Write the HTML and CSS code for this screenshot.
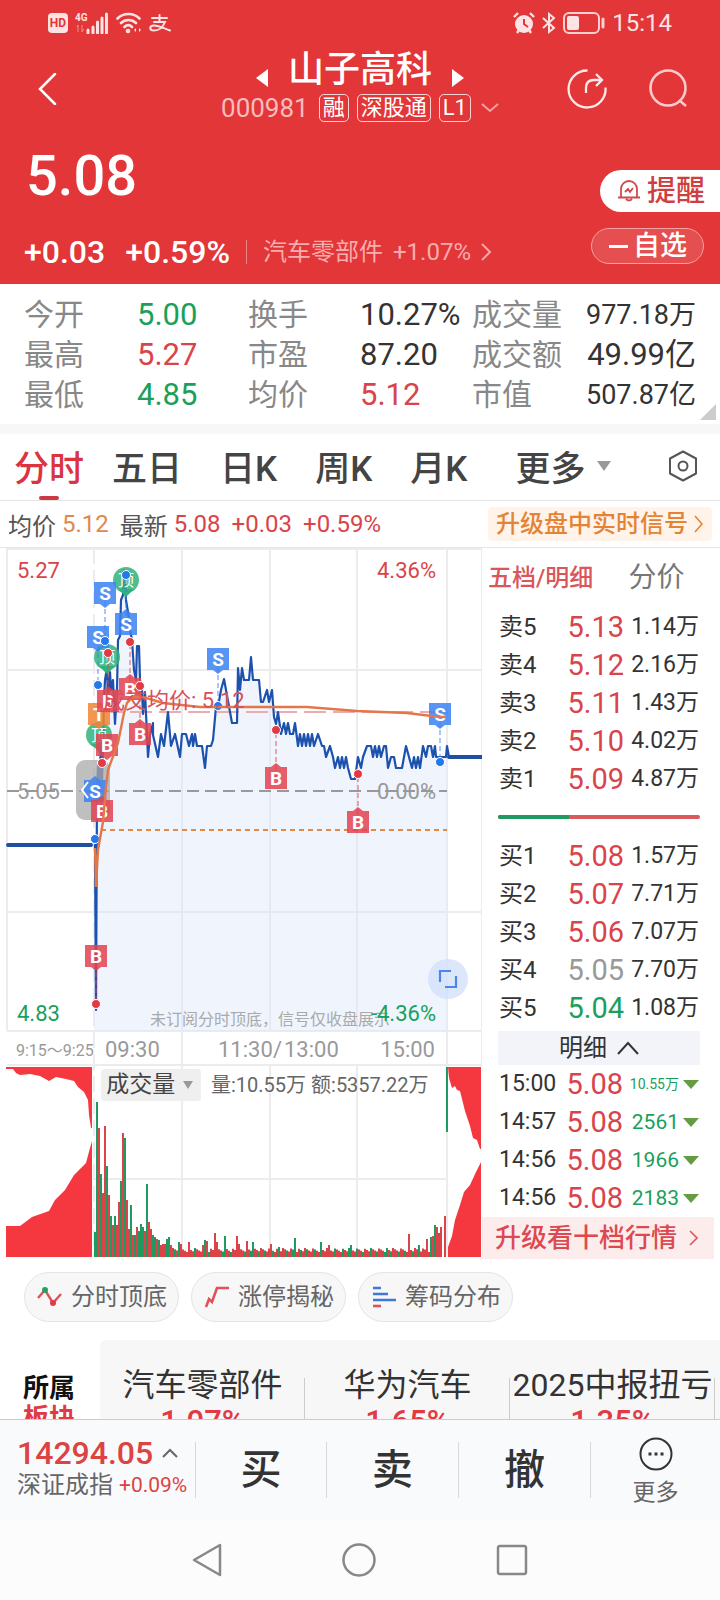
FILE: index.html
```html
<!DOCTYPE html>
<html lang="zh-CN">
<head>
<meta charset="utf-8">
<meta name="viewport" content="width=device-width, initial-scale=1">
<title>山子高科 000981</title>
<link rel="stylesheet" href="styles.css">
</head>
<body>
<div class="app">
  <header class="hero">
    <div class="status">
      <div class="status-group">
        <svg width="20" height="20" viewBox="0 0 20 20"><rect width="20" height="20" rx="4" fill="#fde3e3"/><text x="10" y="14" font-size="12" font-weight="700" text-anchor="middle" fill="#e23638">HD</text></svg>
        <svg width="34" height="22" viewBox="0 0 34 22"><text x="0" y="9" font-size="10" font-weight="700" fill="#fde3e3">4G</text><path d="M3 13v7M2 15l1-2M7 13v7l2-3" stroke="#f08c8c" fill="none"/><path d="M13 18v3M18 15v6M22.500 10v11M27 6v15M31.500 2v19" stroke="#fde3e3" stroke-width="3" stroke-linecap="round"/></svg>
        <svg width="26" height="22" viewBox="0 0 26 22" fill="none" stroke="#fde3e3" stroke-width="2.600" stroke-linecap="round"><path d="M1.500 6.500c6-6 16-6 22 0M5 11c4-4 11-4 15 0M8.500 15c2.500-2.500 5-2.500 7.500 0"/><circle cx="12" cy="19" r="1" /><path d="M18 18l2-2v4zM25 18l-2-2v4z" stroke="none" fill="#fde3e3"/></svg>
        <svg width="22" height="18" viewBox="0 0 22 18" fill="none" stroke="#fde3e3" stroke-width="2" stroke-linecap="round"><path d="M3 4h15M10.500 1v7M5 8h11c-2 5-6 8.500-11 8.500-5 0-5-5 0-5 5 0 10 3 16 5"/></svg>
      </div>
      <div class="status-group">
        <svg width="22" height="22" viewBox="0 0 22 22"><circle cx="11" cy="12" r="9" fill="#fde3e3"/><path d="M1 5l4-4M21 5l-4-4M4 21l2-3M18 21l-2-3" stroke="#fde3e3" stroke-width="2.400"/><path d="M11 7v5l4 3" stroke="#e23638" stroke-width="2" fill="none"/></svg>
        <svg width="14" height="22" viewBox="0 0 14 22" fill="none" stroke="#fde3e3" stroke-width="2"><path d="M1 6l11 10-5 4V2l5 4L1 16"/></svg>
        <svg width="42" height="22" viewBox="0 0 42 22"><rect x="1" y="1" width="35" height="20" rx="5" fill="none" stroke="#fbd0d0" stroke-width="2"/><rect x="4" y="4" width="12" height="14" rx="2" fill="#fde3e3"/><path d="M40 7v8" stroke="#fbd0d0" stroke-width="3" stroke-linecap="round"/></svg>
        <span class="clock">15:14</span>
      </div>
    </div>
    <div class="topbar">
      <button class="icon-btn back" aria-label="返回"><svg width="20" height="32" viewBox="0 0 20 32" fill="none" stroke="#fff" stroke-width="2.500" stroke-linecap="round"><path d="M17 1L2 16l15 15"/></svg></button>
      <div class="title-block">
        <div class="title-row">
          <button class="icon-btn" aria-label="上一只"><svg width="12" height="18" viewBox="0 0 12 18"><path d="M12 0v18L0 9z" fill="#fff"/></svg></button>
          <h1>山子高科</h1>
          <button class="icon-btn" aria-label="下一只"><svg width="12" height="18" viewBox="0 0 12 18"><path d="M0 0v18l12-9z" fill="#fff"/></svg></button>
        </div>
        <div class="code-row"><span class="code">000981</span><span class="tag">融</span><span class="tag">深股通</span><span class="tag">L1</span>
          <svg class="code-more" width="18" height="10" viewBox="0 0 18 10" fill="none" stroke="#f3a0a0" stroke-width="2"><path d="M1 1l8 7 8-7"/></svg></div>
      </div>
      <div class="top-actions">
        <button class="icon-btn" aria-label="分享"><svg width="40" height="40" viewBox="0 0 40 40" fill="none" stroke="#ffe9e9" stroke-width="2.300"><path d="M20.500 1.500A18.500 18.500 0 1 0 38.500 18.500"/><path d="M19 24v-5q0-8 8-8h8M29 5l6 6-6 6"/></svg></button>
        <button class="icon-btn" aria-label="搜索"><svg width="40" height="40" viewBox="0 0 40 40" fill="none" stroke="#fbcaca" stroke-width="2.600"><circle cx="20" cy="19" r="17.500"/><path d="M31 31l7 6"/></svg></button>
      </div>
    </div>
    <div class="quote-row">
      <strong class="price">5.08</strong>
      <button class="remind"><svg width="22" height="24" viewBox="0 0 22 24" fill="none" stroke="#cf4a4c" stroke-width="1.800"><path d="M3 18V10a8 8 0 0 1 16 0v8M0 18.500h22M8 20q3 3 6 0M7 13l3-3 2 3 3-4"/></svg>提醒</button>
    </div>
    <div class="change-row">
      <span class="chg">+0.03</span><span class="chg">+0.59%</span>
      <a class="industry" href="#">汽车零部件 <span>+1.07%</span><svg width="10" height="18" viewBox="0 0 10 18" fill="none" stroke="#f6a5a5" stroke-width="2"><path d="M1 1l8 8-8 8"/></svg></a>
      <button class="watch"><i></i>自选</button>
    </div>
  </header>

  <main class="content">
    <section class="stats">
      <dl>
        <dt>今开</dt><dd class="down">5.00</dd><dt>换手</dt><dd>10.27%</dd><dt>成交量</dt><dd class="end small">977.18万</dd>
        <dt>最高</dt><dd class="up">5.27</dd><dt>市盈</dt><dd>87.20</dd><dt>成交额</dt><dd class="end">49.99亿</dd>
        <dt>最低</dt><dd class="down">4.85</dd><dt>均价</dt><dd class="up">5.12</dd><dt>市值</dt><dd class="end small">507.87亿</dd>
      </dl>
      <svg class="corner" width="16" height="16"><path d="M16 0v16H0z" fill="#ccc"/></svg>
    </section>

    <nav class="periods">
      <button class="active">分时</button><button>五日</button><button>日K</button><button>周K</button><button>月K</button>
      <button class="more">更多<svg width="14" height="10"><path d="M0 0h14L7 10z" fill="#999"/></svg></button>
      <button class="gear" aria-label="设置"><svg width="30" height="32" viewBox="0 0 30 32" fill="none" stroke="#555" stroke-width="2"><path d="M15 1.500L28 8.500v15L15 30.500 2 23.500v-15z" stroke-linejoin="round"/><circle cx="15" cy="16" r="4.500"/></svg></button>
    </nav>

    <div class="info">
      <span class="lab">均价</span><span class="avg">5.12</span><span class="lab gap">最新</span><span class="up">5.08</span><span class="up gap">+0.03</span><span class="up gap">+0.59%</span>
      <a class="upgrade" href="#">升级盘中实时信号<svg width="9" height="18" viewBox="0 0 9 18" fill="none" stroke="#e58335" stroke-width="1.600"><path d="M1 1l7 8-7 8"/></svg></a>
    </div>

    <div class="board">
      <div class="chart">
        <svg class="chart-svg" viewBox="0 548 482 712" role="img" aria-label="分时走势">
          <g id="grid" stroke="#ececee" stroke-width="2" fill="none">
            <path d="M7 549H482M7 670H482M7 912H482M7 1031H482M7 548V1031M182 548V1257M270 548V1031M270 1065V1257M357 548V1031M357 1065V1257M447 548V1257M482 548V1065M7 1065H482M94 1179H447"/>
            <path d="M94 548V1257" stroke-dasharray="16 6"/>
          </g>
          <path id="area" fill="#dbe6fb" fill-opacity=".45"/>
          <path d="M7 791H447" stroke="#999" stroke-width="2" stroke-dasharray="12 6"/>
          <path d="M101 830H447" stroke="#e08a4a" stroke-width="2" stroke-dasharray="5 4"/>
          <path d="M101 712H447" stroke="#efaab0" stroke-width="2" stroke-dasharray="22 7"/>
          <g class="axis">
            <text x="17" y="578" fill="#d9444a">5.27</text><text x="436" y="578" text-anchor="end" fill="#d9444a">4.36%</text>
            <text x="17" y="799" fill="#999">5.05</text><text x="436" y="799" text-anchor="end" fill="#999">0.00%</text>
            <text x="17" y="1021" fill="#19a05a">4.83</text>
            <text x="150" y="1025" font-size="16" fill="#aaa">未订阅分时顶底，信号仅收盘展示</text>
            <text x="436" y="1021" text-anchor="end" fill="#19a05a">-4.36%</text>
            <text x="16" y="1056" font-size="16" fill="#999">9:15～9:25</text>
            <g fill="#999"><text x="105" y="1057">09:30</text><text x="218" y="1057">11:30</text><text x="273" y="1057">/</text><text x="284" y="1057">13:00</text><text x="435" y="1057" text-anchor="end">15:00</text></g>
            <text x="211" y="1092" font-size="20" fill="#666">量:10.55万 额:5357.22万</text>
          </g>
          <path d="M8 845H91M449 757H482" stroke="#214fa0" stroke-width="4" stroke-linecap="round"/>
          <path id="line" fill="none" stroke="#1c52ad" stroke-width="2.200" stroke-linejoin="round"/>
          <rect x="76" y="760" width="34" height="60" rx="9" fill="#aaa" fill-opacity=".75"/>
          <g id="signals"></g>
          <path d="M95 848L96 887L98 850L103 822L106 787L108 770L118 743L124 713L127 703L133 697L143 697L163 703L200 707L250 707L307 707L357 711L407 713L440 717L446 717" fill="none" stroke="#e2784a" stroke-width="2.400"/>
          <path d="M88 782l-6 8 6 8" fill="none" stroke="#fff" stroke-width="2"/>
          <text x="103" y="708" font-size="22" fill="#d9505a">成交均价: 5.12</text>
          <path fill="#f5373f" d="M6 1067H92V1128H91L89 1115 88 1100 84 1092 78 1087 74 1081 66 1079 56 1077 49 1081 40 1076 30 1074 20 1075 16 1073 13 1069H6zM6 1226H20L32 1217 49 1211 55 1200 65 1190 74 1175 86 1163 90 1148 92 1141V1257H6zM448 1067H481V1149H480L477 1140 473 1138 470 1126 465 1111 460 1091 457 1090 455 1086 452 1088 449 1078zM481 1162L476 1172 470 1185 464 1192 460 1205 455 1220 452 1236 448 1247V1257H481z"/>
          <path d="M447 1067V1132" stroke="#1f9a60" stroke-width="2"/>
          <path id="vol-up" stroke="#dc4348" stroke-width="2"/>
          <path id="vol-down" stroke="#1f9a60" stroke-width="2"/>
        </svg>
        <button class="indicator">成交量<svg width="10" height="8"><path d="M0 0h10L5 8z" fill="#999"/></svg></button>
        <button class="expand" aria-label="全屏"><svg width="20" height="20" viewBox="0 0 20 20" fill="none" stroke="#4a87e8" stroke-width="2.200"><path d="M2 13V2h11M7 18h11V7"/></svg></button>
      </div>

      <aside class="depth">
        <div class="depth-tabs"><button class="active">五档/明细</button><button>分价</button></div>
        <table class="orders">
          <tr><th>卖5</th><td class="up">5.13</td><td>1.14万</td></tr>
          <tr><th>卖4</th><td class="up">5.12</td><td>2.16万</td></tr>
          <tr><th>卖3</th><td class="up">5.11</td><td>1.43万</td></tr>
          <tr><th>卖2</th><td class="up">5.10</td><td>4.02万</td></tr>
          <tr><th>卖1</th><td class="up">5.09</td><td>4.87万</td></tr>
        </table>
        <div class="ratio"><i style="width:35%"></i></div>
        <table class="orders">
          <tr><th>买1</th><td class="up">5.08</td><td>1.57万</td></tr>
          <tr><th>买2</th><td class="up">5.07</td><td>7.71万</td></tr>
          <tr><th>买3</th><td class="up">5.06</td><td>7.07万</td></tr>
          <tr><th>买4</th><td class="flat">5.05</td><td>7.70万</td></tr>
          <tr><th>买5</th><td class="down">5.04</td><td>1.08万</td></tr>
        </table>
        <button class="detail">明细<svg width="22" height="14" viewBox="0 0 22 14" fill="none" stroke="#333" stroke-width="2"><path d="M1 13L11 2l10 11"/></svg></button>
        <table class="orders trades">
          <tr><th>15:00</th><td class="up">5.08</td><td class="down tiny">10.55万</td><td><svg width="16" height="9"><path d="M0 0h16L8 9z" fill="#659b42"/></svg></td></tr>
          <tr><th>14:57</th><td class="up">5.08</td><td class="down">2561</td><td><svg width="16" height="9"><path d="M0 0h16L8 9z" fill="#659b42"/></svg></td></tr>
          <tr><th>14:56</th><td class="up">5.08</td><td class="down">1966</td><td><svg width="16" height="9"><path d="M0 0h16L8 9z" fill="#659b42"/></svg></td></tr>
          <tr><th>14:56</th><td class="up">5.08</td><td class="down">2183</td><td><svg width="16" height="9"><path d="M0 0h16L8 9z" fill="#659b42"/></svg></td></tr>
        </table>
        <a class="ten" href="#">升级看十档行情<svg width="9" height="16" viewBox="0 0 9 16" fill="none" stroke="#e0565c" stroke-width="1.600"><path d="M1 1l7 7-7 7"/></svg></a>
      </aside>
    </div>

    <div class="chips">
      <button><svg width="26" height="22" viewBox="0 0 26 22" fill="none" stroke="#e2505a" stroke-width="2.400"><path d="M1 12L8 4l8 13 8-9"/><circle cx="8" cy="4" r="3" fill="#21a366" stroke="none"/><circle cx="16" cy="17" r="3" fill="#dd3c48" stroke="none"/></svg>分时顶底</button>
      <button><svg width="26" height="22" viewBox="0 0 26 22" fill="none" stroke="#e2505a" stroke-width="2.600"><path d="M2 21l3-8 3 3 5-14h12"/></svg>涨停揭秘</button>
      <button><svg width="26" height="22" viewBox="0 0 26 22" stroke="#3f78d8" stroke-width="2.600"><path d="M2 2h8M2 8h15M2 14h23"/><path d="M2 20h8" stroke="#e2505a"/></svg>筹码分布</button>
    </div>

    <section class="sectors">
      <div class="sectors-title"><span>所属</span><span class="up">板块</span></div>
      <div class="sector-list">
        <a href="#"><span>汽车零部件</span><b>1.07%</b></a>
        <a href="#"><span>华为汽车</span><b>1.65%</b></a>
        <a href="#"><span>2025中报扭亏</span><b>1.35%</b></a>
      </div>
    </section>
  </main>

  <footer class="trade-bar">
    <div class="index"><div class="index-value">14294.05<svg width="16" height="10" viewBox="0 0 16 10" fill="none" stroke="#666" stroke-width="2"><path d="M1 9l7-7 7 7"/></svg></div><div class="index-name">深证成指 <span>+0.09%</span></div></div>
    <button>买</button><button>卖</button><button>撤</button>
    <button class="etc"><svg width="34" height="34" viewBox="0 0 34 34" fill="none" stroke="#333" stroke-width="2"><circle cx="17" cy="17" r="15.500"/><path d="M9.500 17h3M15.500 17h3M21.500 17h3" stroke-width="3"/></svg>更多</button>
  </footer>
  <nav class="sysnav">
    <button aria-label="返回"><svg width="30" height="34" viewBox="0 0 30 34" fill="none" stroke="#888" stroke-width="2.500" stroke-linejoin="round"><path d="M28 2v30L2 17z"/></svg></button>
    <button aria-label="主页"><svg width="34" height="34" viewBox="0 0 34 34" fill="none" stroke="#888" stroke-width="2.500"><circle cx="17" cy="17" r="15.500"/></svg></button>
    <button aria-label="最近任务"><svg width="32" height="32" viewBox="0 0 32 32" fill="none" stroke="#888" stroke-width="2.500"><rect x="2" y="2" width="28" height="28" rx="2"/></svg></button>
  </nav>
</div>
<script src="script.js"></script>
</body>
</html>
```
FILE: styles.css
```css
* { box-sizing: border-box; }
body { margin: 0; background: #fff; color: #333; font-family: Roboto, "Noto Sans CJK SC", sans-serif; }
button { border: 0; padding: 0; background: none; font: inherit; color: inherit; cursor: pointer; }
a { color: inherit; text-decoration: none; }
svg { display: block; flex: none; }
svg text { font-family: Roboto, "Noto Sans CJK SC", sans-serif; }
.up { color: #d9444a; }
.down { color: #19a05a; }
.flat { color: #999; }

.app { display: flex; flex-direction: column; height: 100vh; overflow: hidden; white-space: nowrap; }
.hero { flex: none; background: #e23638; color: #fff; }
.status { display: flex; justify-content: space-between; align-items: center; height: 46px; padding: 0 48px; }
.status-group { display: flex; align-items: center; gap: 7px; color: #fde3e3; }
.clock { font-size: 24px; line-height: 28px; }
.icon-btn { display: flex; }
.topbar { display: grid; grid-template-columns: 1fr auto 1fr; align-items: center; height: 86px; padding: 0 32px; }
.back { padding-left: 6px; }
.title-block { padding-bottom: 6px; }
.title-row { display: flex; justify-content: center; align-items: center; gap: 20px; }
.title-row .icon-btn { padding-top: 16px; }
h1 { margin: 0; font-size: 36px; line-height: 44px; font-weight: 500; }
.code-row { display: flex; align-items: center; gap: 8px; height: 32px; }
.code { font-size: 26px; margin-right: 2px; color: #f9bcbc; }
.tag { border: 1px solid #fbd3d3; border-radius: 5px; height: 28px; min-width: 30px; padding: 0 3px; font-size: 22px; line-height: 25px; text-align: center; font-weight: 400; }
.code-more { margin-left: 2px; }
.top-actions { display: flex; justify-content: flex-end; gap: 41px; }
.quote-row { display: flex; justify-content: space-between; align-items: center; height: 88px; padding-left: 26px; }
.price { font-size: 56px; line-height: 86px; font-weight: 500; }
.remind { display: flex; align-items: center; gap: 7px; height: 42px; margin-top: 30px; padding: 0 15px 0 18px; border-radius: 21px 0 0 21px; background: #fff; color: #cf3f42; font-size: 29px; line-height: 40px; font-weight: 500; }
.change-row { display: flex; align-items: center; height: 64px; padding: 0 16px 0 24px; }
.chg { margin-right: 20px; font-size: 32px; font-weight: 500; }
.industry { display: flex; align-items: center; gap: 10px; margin-left: -4px; padding-left: 16px; border-left: 1px solid #ee8585; color: #f8adad; font-size: 24px; line-height: 24px; }
.watch { display: flex; align-items: center; gap: 5px; height: 36px; margin: 0 0 12px auto; padding: 0 16px 0 17px; border: 1px solid #f4a2a2; border-radius: 18px; background: #e54f50; font-size: 27px; line-height: 32px; font-weight: 500; }
.watch i { width: 19px; height: 3px; background: #fff; }

.content { flex: 1; min-height: 0; overflow: hidden; }
.stats { position: relative; height: 150px; padding: 11px 24px 0; border-bottom: 10px solid #f7f7f7; }
.stats dl { display: grid; grid-template-columns: 113px 111px 112px 112px auto 1fr; grid-auto-rows: 40px; margin: 0; line-height: 40px; }
dt { color: #888; font-size: 30px; }
dd { margin: 0; font-size: 31px; }
dd.end { text-align: right; }
dd.small { font-size: 27px; }
.corner { position: absolute; right: 4px; bottom: 4px; }
.periods { display: flex; align-items: center; gap: 38px; height: 67px; padding: 0 22px 0 14px; border-bottom: 1px solid #e6e6e6; font-size: 35px; color: #444; font-weight: 500; }
.periods button { height: 66px; border-bottom: 3px solid transparent; }
.periods .active { position: relative; margin-right: -10px; color: #d9343f; }
.periods .active::after { content: ""; position: absolute; left: 25px; bottom: -3px; width: 20px; height: 4px; border-radius: 2px; background: #c93a44; }
.periods .more { display: flex; align-items: center; gap: 12px; margin-left: 10px; }
.periods .gear { display: flex; align-items: center; margin-left: auto; }
.info { display: flex; align-items: center; gap: 6px; height: 46px; padding: 0 8px; font-size: 24px; }
.info .lab { color: #555; }
.info .avg { color: #de8a4c; }
.info .gap { margin-left: 5px; }
.upgrade { display: flex; align-items: center; gap: 6px; margin-left: auto; height: 34px; padding: 0 9px 0 8px; border-radius: 4px; background: #fff3ea; color: #e58335; line-height: 32px; font-weight: 500; }

.board { display: grid; grid-template-columns: 482fr 238fr; border-top: 1px solid #e6e6e6; }
.chart { position: relative; }
.chart-svg { width: 100%; }
.axis { font-size: 22px; }
.indicator { position: absolute; left: 21%; top: 73.2%; display: flex; align-items: center; gap: 8px; height: 32px; padding: 0 8px 0 5px; border-radius: 4px; background: #efefef; color: #444; font-size: 23px; line-height: 30px; }
.expand { position: absolute; right: 3%; top: 57.700%; display: grid; place-items: center; width: 40px; height: 40px; border-radius: 50%; background: #d3e1fbcc; }
.depth { padding-right: 6px; }
.depth-tabs { display: flex; align-items: center; gap: 35px; height: 60px; padding-left: 6px; font-size: 28px; line-height: 58px; color: #777; }
.depth-tabs .active { font-size: 24px; font-weight: 500; color: #d9565b; }
.orders { width: 100%; border-collapse: collapse; table-layout: fixed; }
.orders tr { height: 38px; }
.orders th, .orders td { padding: 0; line-height: 36px; text-align: right; font-weight: 400; font-size: 23px; }
.orders th { width: 58px; padding-left: 17px; text-align: left; font-size: 24px; }
.orders td:nth-child(2) { width: 84px; font-size: 29px; font-weight: 400; }
.orders td:nth-child(3) { padding-right: 15px; }
.ratio { height: 4px; margin: 17px 14px 18px 16px; border-radius: 2px; background: #da595d; }
.ratio i { display: block; height: 4px; border-radius: 2px 0 0 2px; background: #219a62; }
.detail { display: flex; justify-content: center; align-items: center; gap: 10px; width: calc(100% - 30px); height: 34px; margin: 4px 14px 0 16px; background: #f2f4fa; font-size: 24px; line-height: 32px; }
.trades th { width: 77px; font-size: 23px; }
.trades td:nth-child(2) { width: 64px; }
.trades td:nth-child(3) { padding-right: 0; font-size: 21px; }
.trades td.tiny:nth-child(3) { font-size: 14px; }
.trades td:nth-child(4) { width: 35px; padding-left: 4px; }
.ten { display: flex; align-items: center; justify-content: space-between; height: 42px; padding: 0 16px 0 13px; background: #fdecec; color: #dd4950; font-size: 26px; line-height: 40px; font-weight: 500; }

.chips { display: flex; gap: 12px; padding: 12px 24px 18px; }
.chips button { display: flex; align-items: center; gap: 8px; height: 50px; padding: 0 11px 0 12px; border: 1px solid #e4e4e4; border-radius: 25px; background: #f7f7f7; color: #666; font-size: 24px; line-height: 48px; }
.sectors { display: flex; }
.sectors-title { flex: none; display: flex; flex-direction: column; width: 100px; padding: 33px 0 0 23px; font-size: 26px; line-height: 30px; font-weight: 700; color: #111; }
.sectors-title .up { color: #e23a45; }
.sector-list { flex: 1; display: grid; grid-template-columns: 1fr 1fr 1fr; padding: 20px 5px 20px 0; border-radius: 6px 0 0 0; background: #f7f7f7; }
.sector-list a { position: relative; display: flex; flex-direction: column; align-items: center; font-size: 32px; line-height: 50px; }
.sector-list a::after { content: ""; position: absolute; right: 0; top: 18px; bottom: 0; width: 1px; background: #ccc; }
.sector-list b { color: #e23a45; font-size: 31px; line-height: 24px; font-weight: 500; }

.trade-bar { flex: none; display: grid; grid-template-columns: 195fr 131fr 132fr 132fr 130fr; align-items: center; height: 101px; border-top: 1px solid #ccc; background: #f9fafc; }
.trade-bar button { height: 56px; border-left: 1px solid #d8d8dc; font-size: 41px; line-height: 56px; font-weight: 500; }
.index { padding: 0 0 4px 17px; }
.index-value { display: flex; align-items: center; gap: 9px; color: #dc4343; font-size: 32px; line-height: 34px; font-weight: 500; }
.index-name { display: flex; align-items: center; gap: 6px; color: #666; font-size: 24px; line-height: 30px; }
.index-name span { color: #dc4343; font-size: 21px; }
.trade-bar .etc { display: flex; flex-direction: column; align-items: center; justify-content: center; gap: 6px; padding-top: 6px; font-size: 23px; line-height: 32px; font-weight: 400; color: #666; }
.sysnav { flex: none; display: flex; justify-content: center; align-items: center; gap: 120px; height: 80px; background: #fcfcfc; }
```
FILE: script.js
```js
const line = [94,845,95,845,96,1010,97,790,98,765,99,800,100,770,101,740,102,780,103,745,104,700,105,680,107,668,108,700,110,672,111,690,113,680,115,724,117,690,118,640,120,636,121,600,123,595,124,570,126,600,128,612,130,630,132,640,134,670,136,680,137,646,139,646,140,680,142,690,143,714,145,692,147,735,148,757,150,735,153,723,153,735,158,757,161,734,164,746,168,712,171,746,175,734,180,757,182,734,186,734,189,746,192,734,193,746,195,734,197,746,202,746,205,768,207,746,211,746,213,740,216,707,218,707,221,690,224,679,228,701,232,723,237,723,238,668,240,690,242,668,244,680,249,680,251,657,253,680,259,680,261,702,263,702,267,690,269,702,272,690,274,717,276,724,278,712,281,734,284,723,286,734,288,723,290,734,293,734,295,723,298,746,300,734,302,746,304,734,306,746,308,734,310,746,312,734,314,746,318,734,322,746,324,746,326,757,330,746,333,757,335,768,338,757,340,768,342,757,344,768,346,757,348,768,351,779,355,779,358,757,361,768,363,757,367,746,371,746,373,757,375,746,377,757,379,746,381,757,384,746,386,746,388,768,391,757,394,757,396,768,402,768,406,746,409,757,412,768,414,757,416,768,418,757,420,768,423,746,426,757,428,746,431,746,433,757,435,746,436,757,446,757,447,746,449,757];
let d = 'M';
for (let i = 0; i < line.length; i += 2) d += (i ? 'L' : '') + line[i] + ' ' + line[i + 1];
document.getElementById('line').setAttribute('d', d);
document.getElementById('area').setAttribute('d', d.replace(/L449 757$/, '') + 'V1031H94Z');

// [type, box centre x, box centre y, dot x, dot y]
const signals = [
  ['T', 99, 735], ['O', 99, 714], ['T', 126, 580], ['T', 107, 657],
  ['S', 105, 593, 105, 641], ['S', 98, 637, 98, 685], ['S', 126, 624, 126, 575],
  ['S', 218, 659, 218, 706], ['S', 440, 714, 440, 762], ['S', 95, 791],
  ['B', 108, 701, 108, 653], ['B', 130, 689, 130, 642], ['B', 140, 734, 140, 686],
  ['B', 107, 745, 102, 763], ['B', 102, 811], ['B', 96, 956, 96, 1004],
  ['B', 276, 778, 276, 730], ['B', 358, 822, 358, 774]
];
const color = { S: '#3d82f2', B: '#e24450', O: '#f28436', T: '#2fb37c' };
let out = '';
for (const [t, x, y, dx, dy] of signals) {
  const below = dy > y || t === 'O';
  if (t === 'T') {
    out += `<path d="M${x - 8} ${y + 9}L${x} ${y + 17}L${x + 8} ${y + 9}z" fill="${color.T}"/><circle cx="${x}" cy="${y}" r="13" fill="${color.T}" fill-opacity=".85"/><text x="${x}" y="${y + 6}" font-size="16" text-anchor="middle" fill="#fff">顶</text>`;
    continue;
  }
  if (dx) out += `<path d="M${dx} ${y}V${dy}" stroke="${color[t]}" stroke-opacity=".6" stroke-width="1.500" stroke-dasharray="5 3"/>`;
  const tip = below ? `M${x - 5} ${y + 11}l5 4 5-4z` : `M${x - 5} ${y - 11}l5-4 5 4z`;
  out += `<path d="M${x - 11} ${y - 11}h22v22h-22z${tip}" fill="${color[t]}" fill-opacity=".86"/><text x="${x}" y="${y + 7}" font-size="19" font-weight="700" text-anchor="middle" fill="#fff">${t === 'O' ? 'T' : t}</text>`;
}
for (const [t, x, y, dx, dy] of signals) {
  if (dx) out += `<circle cx="${dx}" cy="${dy}" r="4.500" fill="${t === 'S' ? '#2478ee' : '#e23a45'}" stroke="#fff"/>`;
}
out += '<circle cx="95" cy="839" r="4.500" fill="#2478ee" stroke="#fff"/>';
document.getElementById('signals').innerHTML = out;

// Volume per minute: height, negative for falling bars
const peaks = { 95: -25, 97: -155, 99: 129, 101: -83, 103: 64, 105: 131, 107: -91, 109: 62, 111: -41, 113: 32, 115: -41, 117: 32, 119: 55, 121: -76, 123: 124, 125: -119, 127: 57, 129: 28, 131: -52, 133: 22, 135: -22, 137: 30, 139: -26, 141: -33, 143: -30, 145: 26, 147: -73, 149: 35, 151: 28, 153: -22, 155: -20, 157: 18, 159: -17, 161: 12, 163: 13, 165: 13, 167: -18, 169: -20, 171: 12, 179: -15, 181: 13, 189: 15, 203: 12, 205: -17, 207: 16, 215: 24, 217: 15, 225: -21, 227: 8, 237: 21, 239: 13, 247: 16, 253: -15, 271: 13, 279: -10, 295: -19, 321: -15, 329: 12, 351: -12, 387: -9, 409: 23, 419: -12, 427: 18, 431: -20, 433: 21, 435: -32, 437: 30, 439: 24, 441: 30, 443: 0, 445: 41 };
let up = '', down = '';
for (let x = 95; x < 446; x += 2) {
  const v = x in peaks ? peaks[x] : (5 + (x * 37 % 11) * .4) * (x * 13 % 7 < 2 ? -1 : 1);
  const seg = `M${x} 1257v${-Math.abs(v)}`;
  if (v < 0) down += seg; else up += seg;
}
document.getElementById('vol-up').setAttribute('d', up);
document.getElementById('vol-down').setAttribute('d', down);
```
